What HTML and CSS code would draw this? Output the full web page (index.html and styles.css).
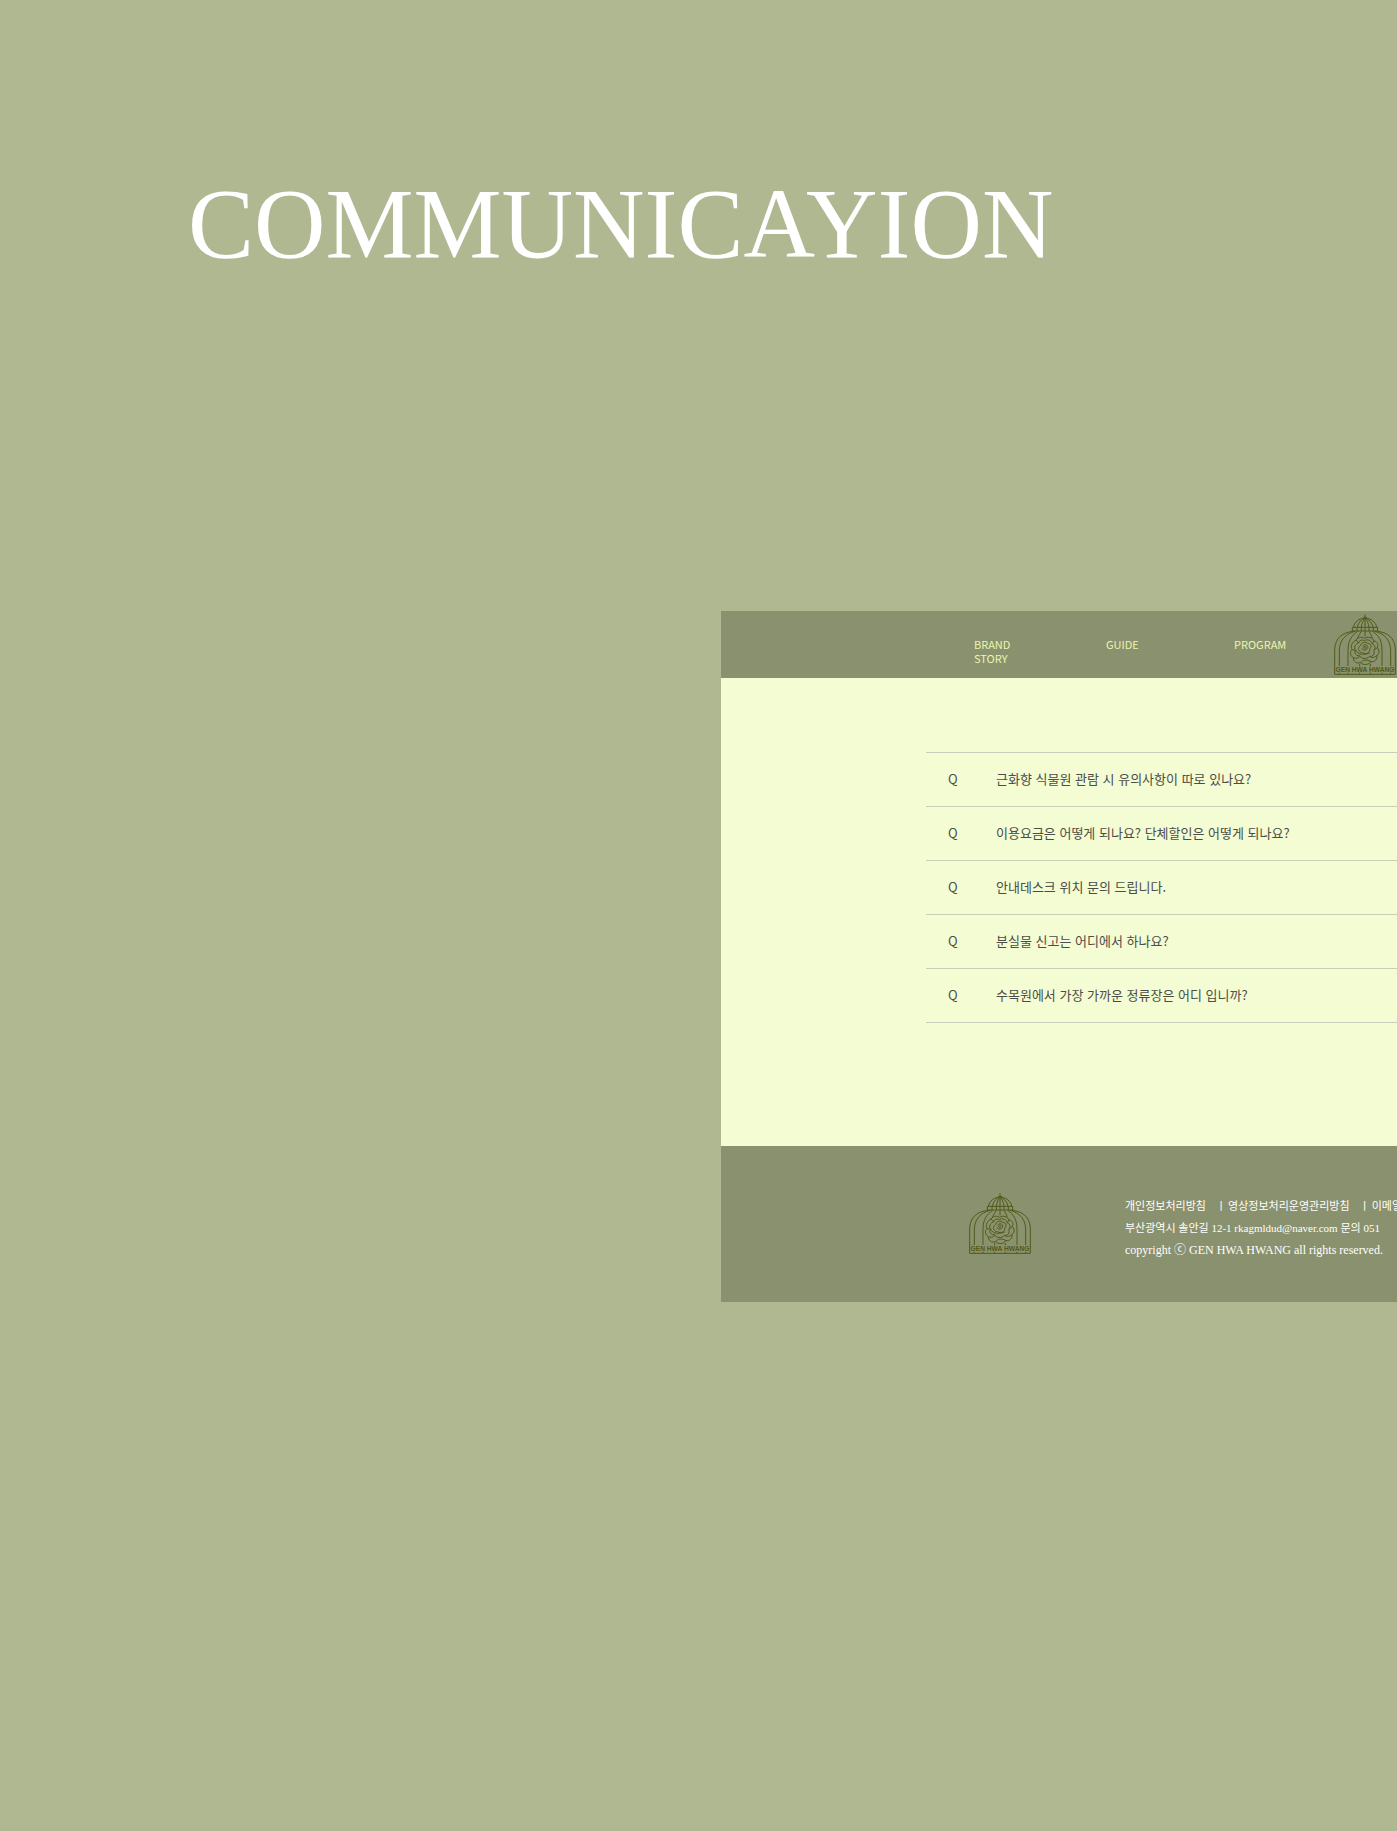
FILE: index.html
```html
<!DOCTYPE html>
<html lang="ko">
<head>
<meta charset="utf-8">
<meta name="viewport" content="width=device-width, initial-scale=1">
<title>COMMUNICAYION</title>
<link rel="stylesheet" href="styles.css">
</head>
<body>
<svg class="defs" aria-hidden="true">
  <symbol id="logo" viewBox="29 26 186 183">
    <g class="logo-lines">
      <path d="M122 27v12M118 36h9M88 66C89 50 105 39 122 38C139 39 155 50 157 66M99 66C101 51 112 42 122 38C132 42 144 51 146 66M111 66C112 53 118 43 122 38C126 43 133 53 134 66M122 38v28"/>
      <path d="M84 66h76v11H84zM98 66v11M111 66v11M122 66v11M134 66v11M147 66v11"/>
      <path d="M86 78C55 82 34 96 31 130V207H213V130C210 96 190 82 159 78"/>
      <path d="M92 78C65 86 46 102 45 135V182M152 78C180 86 198 102 199 135V182"/>
      <path d="M100 78C82 90 71 106 71 135V182M145 78C163 90 173 106 173 135V182"/>
      <path d="M111 78C106 86 102 91 100 99M134 78C139 86 142 91 144 99M122 78V93M45 202v5M71 202v5M106 176v7M138 176v7M106 202v5M138 202v5M173 202v5M199 202v5"/>
      <path d="M95 104C102 93 116 95 120 99C130 92 145 97 149 107C160 108 163 120 159 127C168 136 164 147 158 150C160 163 149 171 140 169C132 180 116 180 109 172C96 176 86 167 87 157C77 151 76 139 83 133C77 123 84 109 95 104Z"/>
      <path d="M103 113C104 104 115 102 120 106C129 100 143 106 144 116C154 119 154 130 148 135C153 146 145 155 136 153C127 164 109 160 106 151C95 152 88 143 94 135C87 126 93 115 103 113Z"/>
      <path d="M109 120C111 110 125 108 130 114C141 114 143 126 136 131C138 142 124 149 115 142C104 142 99 130 105 124ZM115 123C121 113 132 120 130 127C127 136 116 137 112 129M117 127C119 121 126 121 125 127C123 131 119 130 119 126M94 135C100 146 115 151 136 143M87 157C98 161 104 158 106 151M136 153C143 159 151 157 158 150M109 172C114 165 126 160 140 169M95 104L103 113M149 107L144 116M83 133L94 135M159 127L148 135"/>
    </g>
  </symbol>
</svg>
<main class="page">
  <h1 class="title">COMMUNICAYION</h1>
  <section class="site">
    <header class="site-header">
      <nav class="nav">
        <a class="nav-brand" href="#">BRAND STORY</a>
        <a class="nav-guide" href="#">GUIDE</a>
        <a class="nav-program" href="#">PROGRAM</a>
      </nav>
      <a class="home" href="#"><svg class="logo" viewBox="29 26 186 183"><use href="#logo" x="29" y="26" width="186" height="183"/><text class="logo-name" x="122" y="201">GEN HWA HWANG</text></svg></a>
    </header>
    <div class="content">
      <ul class="faq">
        <li><button type="button"><span class="q">Q</span><span>근화향 식물원 관람 시 유의사항이 따로 있나요?</span></button></li>
        <li><button type="button"><span class="q">Q</span><span>이용요금은 어떻게 되나요? 단체할인은 어떻게 되나요?</span></button></li>
        <li><button type="button"><span class="q">Q</span><span>안내데스크 위치 문의 드립니다.</span></button></li>
        <li><button type="button"><span class="q">Q</span><span>분실물 신고는 어디에서 하나요?</span></button></li>
        <li><button type="button"><span class="q">Q</span><span>수목원에서 가장 가까운 정류장은 어디 입니까?</span></button></li>
      </ul>
    </div>
    <footer class="site-footer">
      <svg class="logo" viewBox="29 26 186 183"><use href="#logo" x="29" y="26" width="186" height="183"/><text class="logo-name" x="122" y="201">GEN HWA HWANG</text></svg>
      <div class="info">
        <ul class="policies">
          <li><a href="#">개인정보처리방침</a></li>
          <li><a href="#">영상정보처리운영관리방침</a></li>
          <li><a href="#">이메일</a></li>
        </ul>
        <p>부산광역시 솔안길 12-1 rkagmldud@naver.com 문의 051</p>
        <p class="copyright">copyright ⓒ GEN HWA HWANG all rights reserved.</p>
      </div>
    </footer>
  </section>
</main>
</body>
</html>
```
FILE: styles.css
```css
* {
  box-sizing: border-box;
}

body {
  margin: 0;
  background: #b0b892;
  font-family: "Noto Sans CJK KR", "Noto Sans", sans-serif;
}

a {
  color: inherit;
  text-decoration: none;
}

ul {
  margin: 0;
  padding: 0;
  list-style: none;
}

.defs {
  display: block;
  width: 0;
  height: 0;
}

.page {
  min-height: 100vh;
  padding: 168px 0 528px;
  overflow: hidden;
}

.title {
  margin: 0 0 331px 188px;
  color: #fff;
  font: 400 99px/112px "Liberation Serif", serif;
}

.site {
  margin-left: 721px;
  background: #f3fcd2;
  white-space: nowrap;
}

.site-header {
  display: flex;
  height: 67px;
  padding-left: 253px;
  overflow: hidden;
  background: #8a916e;
}

.nav {
  display: flex;
  flex: none;
  width: 360px;
  padding-top: 26px;
  color: #ecf5ae;
  font-size: 11px;
  line-height: 14px;
}

.nav-brand {
  width: 60px;
  margin-right: 72px;
  white-space: normal;
}

.nav-guide {
  width: 128px;
}

.home {
  flex: none;
  padding-top: 3px;
}

.logo {
  display: block;
  flex: none;
  width: 62px;
  height: 61px;
}

.logo-lines {
  fill: none;
  stroke: #505a18;
  stroke-width: 3;
}

.logo-name {
  fill: #4f5a17;
  font: 700 20px "Liberation Sans", sans-serif;
  text-anchor: middle;
}

.content {
  padding: 74px 0 123px 205px;
}

.faq {
  border-top: 1px solid #cacdb9;
}

.faq li {
  border-bottom: 1px solid #cacdb9;
}

.faq button {
  display: flex;
  align-items: center;
  width: 100%;
  height: 53px;
  padding: 0 0 2px 22px;
  border: 0;
  background: none;
  color: #4c4c48;
  font: inherit;
  font-size: 13px;
  text-align: left;
}

.q {
  width: 48px;
}

.site-footer {
  display: flex;
  height: 156px;
  padding: 47px 0 0 248px;
  overflow: hidden;
  background: #8a916e;
}

.info {
  flex: none;
  margin-left: 94px;
  padding-top: 2px;
  color: #fff;
  font: 11px/22px "Liberation Serif", "Noto Sans CJK KR", serif;
}

.info p {
  margin: 0;
}

.info .copyright {
  font-size: 12px;
}

.policies {
  display: flex;
}

.policies li + li::before {
  content: "ㅣ";
  margin: 0 2px 0 10px;
}
```
